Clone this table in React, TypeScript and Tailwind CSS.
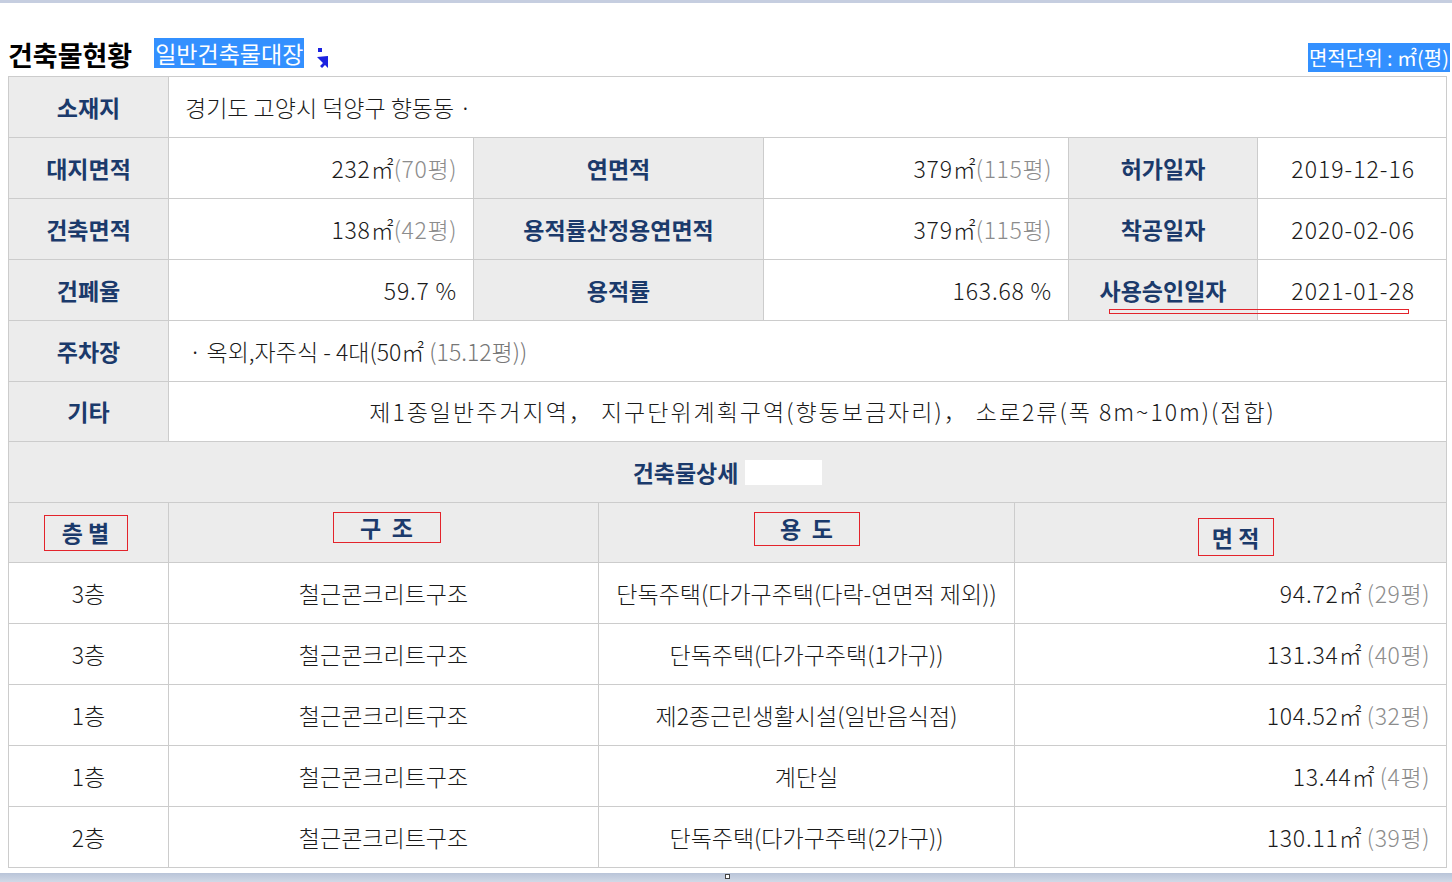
import React from 'react'

const label = 'bg-[#ececec] border border-[#cccccc] text-center font-bold text-[23px] text-[#1b3a6b]'
const value = 'border border-[#cccccc] text-[23px] text-[#1a1a1a] font-light'

function Area({ m2, py, gap }: { m2: string; py: string; gap?: boolean }) {
  return (
    <span>
      <span className="tracking-[0.8px]">{m2}</span>㎡{gap ? ' ' : ''}
      <span className="text-[#8c8c8c] tracking-[0.6px]">({py}평)</span>
    </span>
  )
}

function RedBox({ text, className }: { text: string; className: string }) {
  return (
    <span className={`inline-flex items-center justify-center border border-[#e3232b] font-bold text-[23px] text-[#1b3a6b] ${className}`}>
      {text}
    </span>
  )
}

function Cursor() {
  return (
    <svg width="14" height="22" viewBox="0 0 14 22" className="mt-[10px]">
      <rect x="2" y="0" width="4" height="4" fill="#1b22e0" />
      <path d="M1 9 L12 8 L12 20 L9 17 L6 20 L4 18 L7 15 Z" fill="#1b22e0" />
    </svg>
  )
}

export default function App() {
  const details = [
    { floor: '3층', structure: '철근콘크리트구조', use: '단독주택(다가구주택(다락-연면적 제외))', m2: '94.72', py: '29' },
    { floor: '3층', structure: '철근콘크리트구조', use: '단독주택(다가구주택(1가구))', m2: '131.34', py: '40' },
    { floor: '1층', structure: '철근콘크리트구조', use: '제2종근린생활시설(일반음식점)', m2: '104.52', py: '32' },
    { floor: '1층', structure: '철근콘크리트구조', use: '계단실', m2: '13.44', py: '4' },
    { floor: '2층', structure: '철근콘크리트구조', use: '단독주택(다가구주택(2가구))', m2: '130.11', py: '39' },
  ]

  return (
    <div className="w-[1452px] h-[882px] bg-white overflow-hidden font-['Noto_Sans_CJK_KR','Noto_Sans',sans-serif] text-[#1a1a1a]">
      <div className="h-[3px] bg-[#c6cee0]" />

      {/* title row */}
      <div className="h-[73px] px-2 flex justify-between">
        <div className="flex items-end pb-[8px]">
          <h1 className="text-[27px] font-bold text-black leading-[30px] mb-[-2px]">건축물현황</h1>
          <span className="ml-[22px] bg-[#3390ff] text-white text-[23px] leading-[30px] h-[30px] px-[1px]">일반건축물대장</span>
          <span className="ml-[12px] self-start mt-[35px]">
            <Cursor />
          </span>
        </div>
        <div className="self-end mb-[4px] -mr-[6px]">
          <span className="bg-[#3390ff] text-white text-[20px] leading-[29px] inline-block h-[29px] px-[1px]">면적단위 : ㎡(평)</span>
        </div>
      </div>

      {/* main table */}
      <div className="relative ml-2 w-[1438px]">
        <table className="w-[1438px] table-fixed border-collapse">
          <colgroup>
            <col className="w-[160px]" />
            <col className="w-[305px]" />
            <col className="w-[125px]" />
            <col className="w-[165px]" />
            <col className="w-[251px]" />
            <col className="w-[54px]" />
            <col className="w-[189px]" />
            <col className="w-[189px]" />
          </colgroup>
          <tbody>
            <tr className="h-[61px]">
              <td className={label}>소재지</td>
              <td colSpan={7} className={`${value} text-left pl-4`}>경기도 고양시 덕양구 향동동 ·</td>
            </tr>
            <tr className="h-[61px]">
              <td className={label}>대지면적</td>
              <td className={`${value} text-right pr-4`}><Area m2="232" py="70" /></td>
              <td colSpan={2} className={label}>연면적</td>
              <td colSpan={2} className={`${value} text-right pr-4`}><Area m2="379" py="115" /></td>
              <td className={label}>허가일자</td>
              <td className={`${value} text-right pr-[31px] tracking-[1px]`}>2019-12-16</td>
            </tr>
            <tr className="h-[61px]">
              <td className={label}>건축면적</td>
              <td className={`${value} text-right pr-4`}><Area m2="138" py="42" /></td>
              <td colSpan={2} className={label}>용적률산정용연면적</td>
              <td colSpan={2} className={`${value} text-right pr-4`}><Area m2="379" py="115" /></td>
              <td className={label}>착공일자</td>
              <td className={`${value} text-right pr-[31px] tracking-[1px]`}>2020-02-06</td>
            </tr>
            <tr className="h-[61px]">
              <td className={label}>건폐율</td>
              <td className={`${value} text-right pr-4 tracking-[0.8px]`}>59.7 %</td>
              <td colSpan={2} className={label}>용적률</td>
              <td colSpan={2} className={`${value} text-right pr-4 tracking-[0.8px]`}>163.68 %</td>
              <td className={label}>사용승인일자</td>
              <td className={`${value} text-right pr-[31px] tracking-[1px]`}>2021-01-28</td>
            </tr>
            <tr className="h-[61px]">
              <td className={label}>주차장</td>
              <td colSpan={7} className={`${value} text-left pl-[20px]`}>
                · 옥외,자주식 - 4대(50㎡ <span className="text-[#777]">(15.12평))</span>
              </td>
            </tr>
            <tr className="h-[60px]">
              <td className={label}>기타</td>
              <td colSpan={7} className={`${value} text-center text-[22px] tracking-[2px] pl-[30px]`}>
                제1종일반주거지역， 지구단위계획구역(향동보금자리)， 소로2류(폭 8m~10m)(접합)
              </td>
            </tr>
            <tr className="h-[61px]">
              <td colSpan={8} className={label}>
                <span className="inline-flex items-center">
                  건축물상세
                  <span className="inline-block ml-[7px] w-[77px] h-[25px] bg-white" />
                </span>
              </td>
            </tr>
            <tr className="h-[60px]">
              <td className={label}>
                <RedBox text="층 별" className="w-[84px] h-[36px] -ml-[6px]" />
              </td>
              <td colSpan={2} className={label}>
                <RedBox text="구  조" className="w-[108px] h-[31px] mb-[12px] ml-[6px] whitespace-pre" />
              </td>
              <td colSpan={2} className={label}>
                <RedBox text="용  도" className="w-[106px] h-[34px] mb-[8px] whitespace-pre" />
              </td>
              <td colSpan={3} className={label}>
                <RedBox text="면 적" className="w-[76px] h-[38px] mt-[8px] ml-[10px] items-start pt-[1px]" />
              </td>
            </tr>
            {details.map((d, i) => (
              <tr key={i} className="h-[61px]">
                <td className={`${value} text-center`}>{d.floor}</td>
                <td colSpan={2} className={`${value} text-center`}>{d.structure}</td>
                <td colSpan={2} className={`${value} text-center`}>{d.use}</td>
                <td colSpan={3} className={`${value} text-right pr-4`}>
                  <Area m2={d.m2} py={d.py} gap />
                </td>
              </tr>
            ))}
          </tbody>
        </table>
        {/* red annotation under 사용승인일자 */}
        <div className="absolute left-[1101px] top-[233px] w-[300px] h-[5px] border border-[#e3232b]" />
      </div>

      {/* bottom window bar */}
      <div className="mt-[5px] h-[10px] bg-gradient-to-b from-[#b9c4d8] to-[#d3dbe8] flex justify-center">
        <span className="mt-[1px] ml-[2px] w-[5px] h-[5px] bg-white border border-[#444]" />
      </div>
    </div>
  )
}
